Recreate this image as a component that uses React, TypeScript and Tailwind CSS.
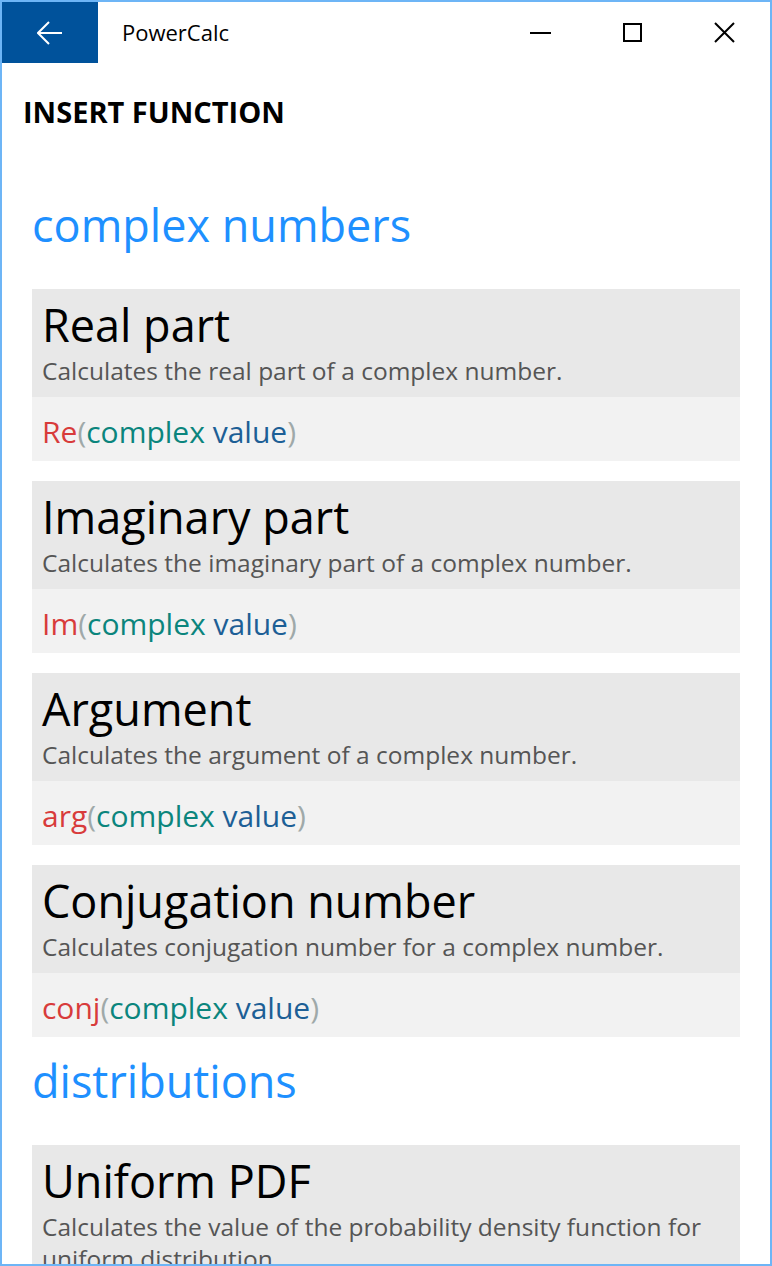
import React from "react";

type Fn = { title: string; desc: string; name: string; arg: string[] };

const SECTIONS: { header: string; items: Fn[] }[] = [
  {
    header: "complex numbers",
    items: [
      { title: "Real part", desc: "Calculates the real part of a complex number.", name: "Re", arg: ["complex", "value"] },
      { title: "Imaginary part", desc: "Calculates the imaginary part of a complex number.", name: "Im", arg: ["complex", "value"] },
      { title: "Argument", desc: "Calculates the argument of a complex number.", name: "arg", arg: ["complex", "value"] },
      { title: "Conjugation number", desc: "Calculates conjugation number for a complex number.", name: "conj", arg: ["complex", "value"] },
    ],
  },
  {
    header: "distributions",
    items: [
      {
        title: "Uniform PDF",
        desc: "Calculates the value of the probability density function for uniform distribution.",
        name: "unifpdf",
        arg: ["x", "a", "b"],
      },
    ],
  },
];

const font = { fontFamily: '"Open Sans", "Noto Sans", sans-serif' };

function FunctionCard({ fn, last }: { fn: Fn; last: boolean }) {
  return (
    <div className={last ? "" : "mb-[20px]"}>
      <div className="bg-[#e8e8e8] px-[10px] pt-[6px] pb-[10px]">
        <div className="text-[45px] leading-[60px] text-black">{fn.title}</div>
        <div className="text-[24.5px] leading-[32px] text-[#555555]">{fn.desc}</div>
      </div>
      <div className="bg-[#f2f2f2] h-[64px] px-[10px] pt-[4px] flex items-center text-[30px]">
        <span className="text-[#d83b3b]">{fn.name}</span>
        <span className="text-[#9fa9a9]">(</span>
        <span className="text-[#0b857d]">{fn.arg[0]}</span>
        <span>&nbsp;</span>
        <span className="text-[#1d5f96]">{fn.arg[1]}</span>
        <span className="text-[#9fa9a9]">)</span>
      </div>
    </div>
  );
}

export default function App() {
  return (
    <div style={font} className="w-[772px] h-[1266px] border-2 border-[#6db5f6] bg-white overflow-hidden flex flex-col">
      {/* title bar */}
      <div className="h-[61px] flex items-center shrink-0">
        <div className="w-[96px] h-full bg-[#00529b] flex items-center justify-center">
          <svg width="26" height="24" viewBox="0 0 26 24" fill="none" stroke="white" strokeWidth="2">
            <path d="M25 12H2M12 1L1 12l11 11" />
          </svg>
        </div>
        <div className="ml-[24px] text-[22px] text-black">PowerCalc</div>
        <div className="ml-auto flex h-full">
          <div className="w-[92px] flex items-center justify-center">
            <div className="w-[21px] h-[2px] bg-black" />
          </div>
          <div className="w-[92px] flex items-center justify-center">
            <div className="w-[19px] h-[19px] border-2 border-black" />
          </div>
          <div className="w-[92px] flex items-center justify-center">
            <svg width="21" height="21" viewBox="0 0 21 21" stroke="black" strokeWidth="2">
              <path d="M1 1l19 19M20 1L1 20" />
            </svg>
          </div>
        </div>
      </div>

      <div className="pl-[21px] mt-[29px] text-[29px] font-bold text-black leading-[40px] shrink-0">INSERT FUNCTION</div>

      <div className="px-[30px] shrink-0">
        {SECTIONS.map((s, si) => (
          <div key={s.header}>
            <div className={`text-[45px] text-[#1e90ff] leading-[60px] mb-[34px] ${si === 0 ? "mt-[63px]" : "mt-[14px]"}`}>
              {s.header}
            </div>
            {s.items.map((fn, i) => (
              <FunctionCard key={fn.title} fn={fn} last={i === s.items.length - 1} />
            ))}
          </div>
        ))}
      </div>
    </div>
  );
}
